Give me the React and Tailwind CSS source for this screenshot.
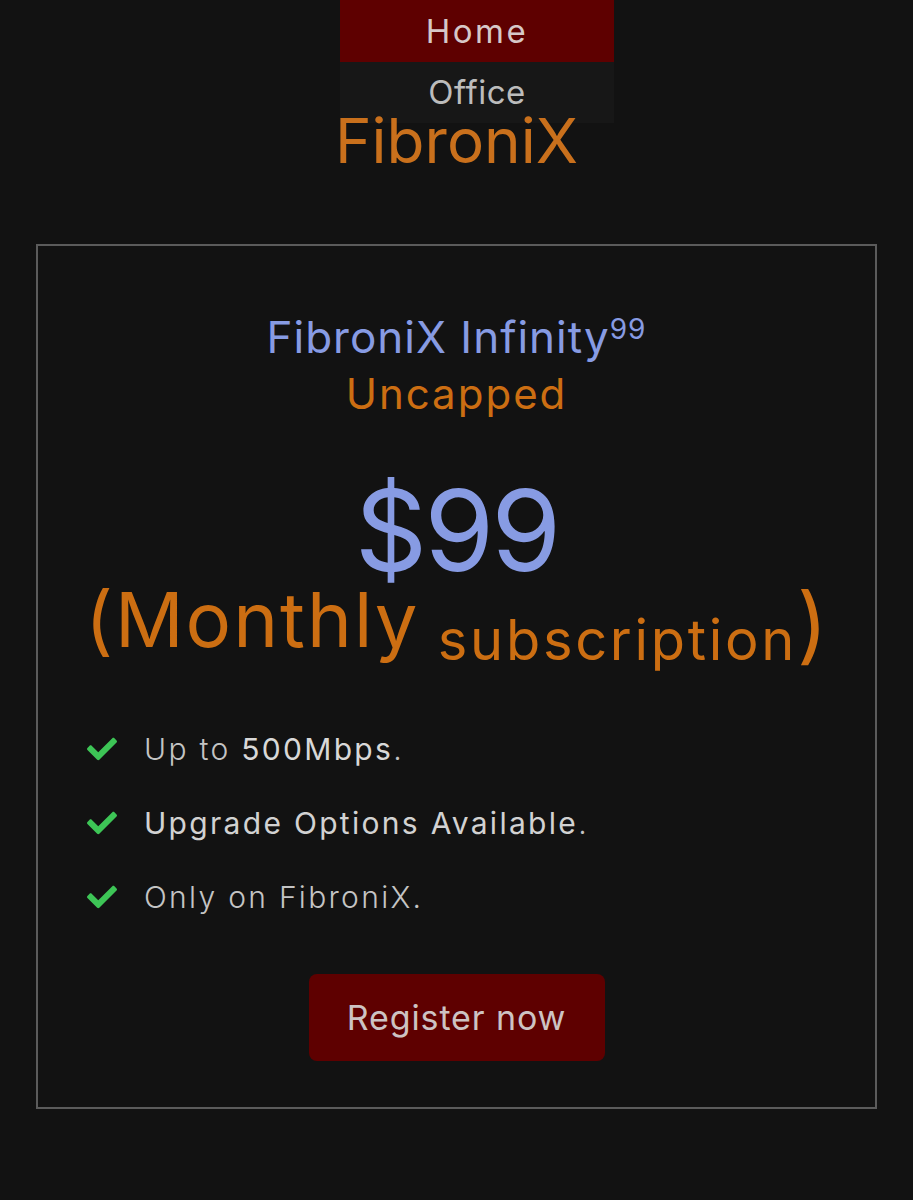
import React from "react";
import { FaCheck } from "react-icons/fa";

function Feature({ children }) {
  return (
    <li className="flex items-center gap-[27px] text-[30px] leading-none tracking-[2.3px]">
      <FaCheck className="h-[30px] w-[30px] shrink-0 text-[#3dc556]" />
      <span>{children}</span>
    </li>
  );
}

export default function App() {
  return (
    <div className="relative min-h-[1200px] overflow-hidden bg-[#121212] font-['Inter',sans-serif] text-[#c4c4c4]">
      <nav className="absolute left-[340px] top-0 z-10 w-[274px]">
        <a className="block h-[62px] bg-[#5e0000] text-center text-[33px] leading-[62px] tracking-[2.5px] text-[#d6c8c8]">
          Home
        </a>
        <a className="block h-[61px] bg-[#171717] text-center text-[33px] leading-[61px] tracking-[0.5px] text-[#bcbcbc]">
          Office
        </a>
      </nav>

      <header className="relative z-20 pt-[110px] text-center text-[62px] leading-none text-[#c9701c]">
        FibroniX
      </header>

      <section className="mx-[36px] mt-[72px] border-2 border-[#5b5b5b] pb-[46px] pt-[69px]">
        <h2 className="text-center text-[44px] leading-none tracking-[1px] text-[#879be3]">
          FibroniX Infinity<sup className="text-[28px]">99</sup>
        </h2>
        <p className="mt-[14px] text-center text-[42px] leading-none tracking-[2px] text-[#cc6e12]">
          Uncapped
        </p>
        <p className="mt-[59px] text-center text-[113px] leading-none tracking-[-3px] text-[#879be3]">
          $99
        </p>
        <p className="-mt-[6px] whitespace-nowrap text-center text-[76px] leading-none tracking-[2px] text-[#cc6e12]">
          (Monthly
          <span className="align-[-13px] text-[56px] tracking-[2.7px]"> subscription</span>
          <span className="align-[-7px] text-[84px] tracking-normal">)</span>
        </p>

        <ul className="mt-[66px] flex flex-col gap-[44px] pl-[49px]">
          <Feature>
            <span className="font-light">Up to </span>
            <span className="font-normal text-[#d8d8d8]">500Mbps</span>
            <span className="font-light">.</span>
          </Feature>
          <Feature>
            <span className="font-normal text-[#d2d2d2]">Upgrade Options Available</span>
            <span className="font-light">.</span>
          </Feature>
          <Feature>
            <span className="font-light">Only on FibroniX.</span>
          </Feature>
        </ul>

        <div className="mt-[62px] flex justify-center">
          <button className="h-[87px] w-[296px] rounded-[8px] bg-[#5e0000] text-[34px] tracking-[0.9px] text-[#cdc3c3]">
            Register now
          </button>
        </div>
      </section>
    </div>
  );
}
